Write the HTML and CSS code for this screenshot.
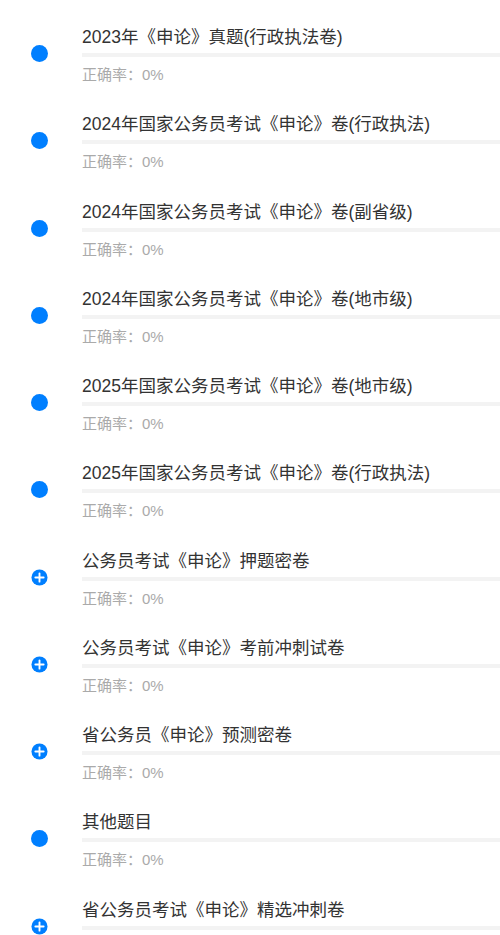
FILE: index.html
```html
<!DOCTYPE html>
<html lang="zh-CN">
<head>
    <meta charset="UTF-8">
    <title>申论题库</title>
    <link rel="stylesheet" href="styles.css">
</head>
<body>

    <!-- 试卷列表 -->
    <div class="paper-list">
        <div class="paper-item">
            <div class="paper-icon"><span class="dot"></span></div>
            <div class="paper-body">
                <div class="paper-title">2023年《申论》真题(行政执法卷)</div>
                <div class="paper-bar"></div>
                <div class="paper-rate">正确率：0%</div>
            </div>
        </div>
        <div class="paper-item">
            <div class="paper-icon"><span class="dot"></span></div>
            <div class="paper-body">
                <div class="paper-title">2024年国家公务员考试《申论》卷(行政执法)</div>
                <div class="paper-bar"></div>
                <div class="paper-rate">正确率：0%</div>
            </div>
        </div>
        <div class="paper-item">
            <div class="paper-icon"><span class="dot"></span></div>
            <div class="paper-body">
                <div class="paper-title">2024年国家公务员考试《申论》卷(副省级)</div>
                <div class="paper-bar"></div>
                <div class="paper-rate">正确率：0%</div>
            </div>
        </div>
        <div class="paper-item">
            <div class="paper-icon"><span class="dot"></span></div>
            <div class="paper-body">
                <div class="paper-title">2024年国家公务员考试《申论》卷(地市级)</div>
                <div class="paper-bar"></div>
                <div class="paper-rate">正确率：0%</div>
            </div>
        </div>
        <div class="paper-item">
            <div class="paper-icon"><span class="dot"></span></div>
            <div class="paper-body">
                <div class="paper-title">2025年国家公务员考试《申论》卷(地市级)</div>
                <div class="paper-bar"></div>
                <div class="paper-rate">正确率：0%</div>
            </div>
        </div>
        <div class="paper-item">
            <div class="paper-icon"><span class="dot"></span></div>
            <div class="paper-body">
                <div class="paper-title">2025年国家公务员考试《申论》卷(行政执法)</div>
                <div class="paper-bar"></div>
                <div class="paper-rate">正确率：0%</div>
            </div>
        </div>
        <div class="paper-item">
            <div class="paper-icon">
                <svg class="plus" viewBox="0 0 18 18"><circle cx="9" cy="9" r="8.5" fill="#007fff"/><path d="M9 4.6v8.8M4.6 9h8.8" stroke="#fff" stroke-width="2" stroke-linecap="round"/></svg>
            </div>
            <div class="paper-body">
                <div class="paper-title">公务员考试《申论》押题密卷</div>
                <div class="paper-bar"></div>
                <div class="paper-rate">正确率：0%</div>
            </div>
        </div>
        <div class="paper-item">
            <div class="paper-icon">
                <svg class="plus" viewBox="0 0 18 18"><circle cx="9" cy="9" r="8.5" fill="#007fff"/><path d="M9 4.6v8.8M4.6 9h8.8" stroke="#fff" stroke-width="2" stroke-linecap="round"/></svg>
            </div>
            <div class="paper-body">
                <div class="paper-title">公务员考试《申论》考前冲刺试卷</div>
                <div class="paper-bar"></div>
                <div class="paper-rate">正确率：0%</div>
            </div>
        </div>
        <div class="paper-item">
            <div class="paper-icon">
                <svg class="plus" viewBox="0 0 18 18"><circle cx="9" cy="9" r="8.5" fill="#007fff"/><path d="M9 4.6v8.8M4.6 9h8.8" stroke="#fff" stroke-width="2" stroke-linecap="round"/></svg>
            </div>
            <div class="paper-body">
                <div class="paper-title">省公务员《申论》预测密卷</div>
                <div class="paper-bar"></div>
                <div class="paper-rate">正确率：0%</div>
            </div>
        </div>
        <div class="paper-item">
            <div class="paper-icon"><span class="dot"></span></div>
            <div class="paper-body">
                <div class="paper-title">其他题目</div>
                <div class="paper-bar"></div>
                <div class="paper-rate">正确率：0%</div>
            </div>
        </div>
        <div class="paper-item">
            <div class="paper-icon">
                <svg class="plus" viewBox="0 0 18 18"><circle cx="9" cy="9" r="8.5" fill="#007fff"/><path d="M9 4.6v8.8M4.6 9h8.8" stroke="#fff" stroke-width="2" stroke-linecap="round"/></svg>
            </div>
            <div class="paper-body">
                <div class="paper-title">省公务员考试《申论》精选冲刺卷</div>
                <div class="paper-bar"></div>
                <div class="paper-rate">正确率：0%</div>
            </div>
        </div>
    </div>

</body>
</html>
```

FILE: styles.css
```css
body {
    margin: 0;
    background-color: #fff;
    font-family: "Liberation Sans", "Noto Sans CJK SC", sans-serif;
    overflow: hidden;
}

/* 试卷列表 */
.paper-list {
    padding-top: 13px;
}

.paper-item {
    display: flex;
    padding: 13px 0 15.25px;
}

/* 左侧图标 */
.paper-icon {
    width: 82px;
    flex-shrink: 0;
    box-sizing: border-box;
    padding: 19px 0 0 31px;
}

.dot {
    display: block;
    width: 17px;
    height: 17px;
    border-radius: 50%;
    background-color: #007fff;
}

.plus {
    display: block;
    width: 17px;
    height: 17px;
}

/* 右侧内容 */
.paper-body {
    flex: 1;
    min-width: 0;
}

.paper-title {
    font-size: 17.5px;
    line-height: 22px;
    color: #333;
    white-space: nowrap;
}

.paper-bar {
    height: 4px;
    margin-top: 5px;
    background-color: #f3f3f3;
}

.paper-rate {
    margin-top: 8px;
    font-size: 15px;
    line-height: 20px;
    color: #aaa;
}
```
